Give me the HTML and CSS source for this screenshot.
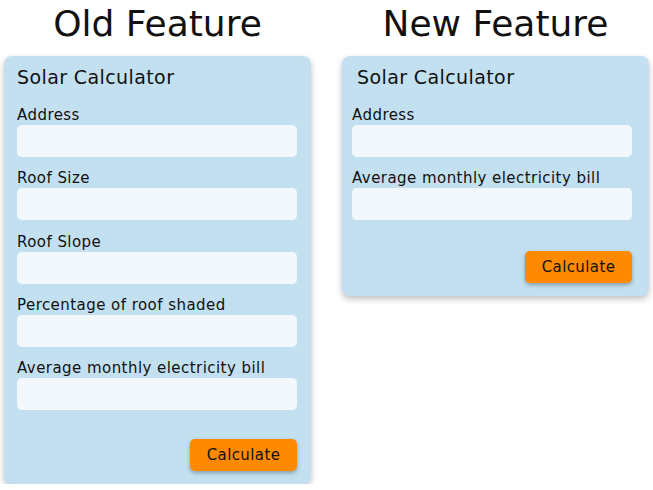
FILE: index.html
```html
<!DOCTYPE html>
<html lang="en">
<head>
  <meta charset="UTF-8">
  <title>Solar Calculator</title>
  <link rel="stylesheet" href="styles.css">
</head>
<body>

  <div class="compare">
    <div class="column">
      <h1>Old Feature</h1>
      <form class="card">
        <h3>Solar Calculator</h3>
        <label>Address</label>
        <input type="text">
        <label>Roof Size</label>
        <input type="text">
        <label>Roof Slope</label>
        <input type="text">
        <label>Percentage of roof shaded</label>
        <input type="text">
        <label>Average monthly electricity bill</label>
        <input type="text">
        <div class="actions">
          <button type="button">Calculate</button>
        </div>
      </form>
    </div>

    <div class="column">
      <h1>New Feature</h1>
      <form class="card card-new">
        <h3>Solar Calculator</h3>
        <label>Address</label>
        <input type="text">
        <label>Average monthly electricity bill</label>
        <input type="text">
        <div class="actions">
          <button type="button">Calculate</button>
        </div>
      </form>
    </div>
  </div>

</body>
</html>
```

FILE: styles.css
```css
* {
  box-sizing: border-box;
}

body {
  margin: 0;
  background: white;
  font-family: "DejaVu Sans", sans-serif;
  color: #111;
}

.compare {
  display: flex;
  gap: 31px;
  padding: 0 4px;
}

.column {
  width: 307px;
  display: flex;
  flex-direction: column;
}

h1 {
  margin: 0 0 8px;
  font-weight: normal;
  font-size: 36px;
  line-height: 48px;
  text-align: center;
}

.card {
  background: #c3e0f0;
  border-radius: 8px;
  padding: 9px 14px 13px 13px;
  box-shadow: 0 3px 6px rgba(0,0,0,0.25);
  display: flex;
  flex-direction: column;
}

.card-new {
  padding: 9px 17px 13px 10px;
}

.card-new h3 {
  padding-left: 5px;
}

h3 {
  margin: 0 0 17px;
  font-weight: normal;
  font-size: 19px;
  letter-spacing: 0.4px;
  line-height: 24px;
}

label {
  display: block;
  font-size: 15px;
  letter-spacing: 0.45px;
  line-height: 19px;
}

input {
  height: 32px;
  margin: 0 0 12.3px;
  border: none;
  border-radius: 5px;
  background: #f3f8fc;
}

.actions {
  display: flex;
  justify-content: flex-end;
  margin-top: 16.5px;
}

.card-new .actions {
  margin-top: 18.5px;
}

button {
  width: 107px;
  height: 32px;
  border: none;
  border-radius: 5px;
  background: #ff8a00;
  color: #111;
  font-family: inherit;
  font-size: 15px;
  letter-spacing: 0.4px;
  box-shadow: 0 2px 4px rgba(0,0,0,0.3);
}
```
